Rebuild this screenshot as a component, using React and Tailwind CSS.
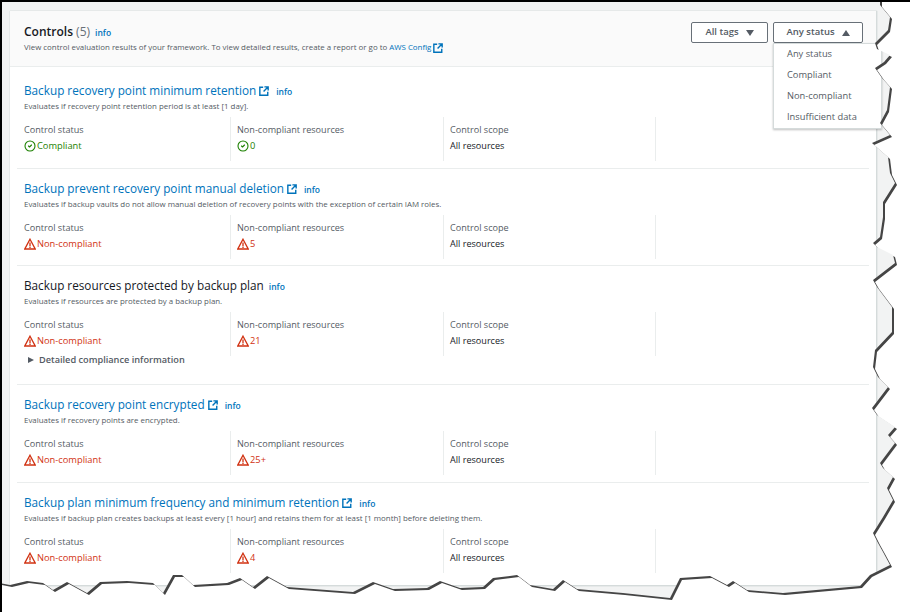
import { CircleCheck } from "lucide-react"

const font = "font-['Open_Sans','Noto_Sans',sans-serif]"

const controls = [
  {
    title: "Backup recovery point minimum retention",
    desc: "Evaluates if recovery point retention period is at least [1 day].",
    link: true,
    ok: true,
    count: "0",
    height: "h-[98px]",
  },
  {
    title: "Backup prevent recovery point manual deletion",
    desc: "Evaluates if backup vaults do not allow manual deletion of recovery points with the exception of certain IAM roles.",
    link: true,
    count: "5",
    height: "h-[97px]",
  },
  {
    title: "Backup resources protected by backup plan",
    desc: "Evaluates if resources are protected by a backup plan.",
    count: "21",
    details: true,
    height: "h-[119px]",
  },
  {
    title: "Backup recovery point encrypted",
    desc: "Evaluates if recovery points are encrypted.",
    link: true,
    count: "25+",
    height: "h-[98px]",
  },
  {
    title: "Backup plan minimum frequency and minimum retention",
    desc: "Evaluates if backup plan creates backups at least every [1 hour] and retains them for at least [1 month] before deleting them.",
    link: true,
    count: "4",
    last: true,
    height: "h-[100px]",
  },
]

const ExternalIcon = ({ className }) => (
  <svg viewBox="0 0 12 12" className={className} fill="none" stroke="currentColor" strokeWidth="1.7">
    <path d="M5 1.5H1v9.5h9.5V7" />
    <path d="M6.5 1h4.5v4.5M11 1 5.5 6.5" />
  </svg>
)

const WarnIcon = () => (
  <svg viewBox="0 0 12 12" className="h-[12px] w-[12px] shrink-0 text-[#d13212]" fill="none" stroke="currentColor" strokeWidth="1.3">
    <path d="M6 1.2 11.2 11H.8Z" strokeLinejoin="miter" />
    <path d="M6 4.4v3.6M6 8.6v1.3" />
  </svg>
)

const Status = ({ ok, children }) => (
  <div className={`mt-[4px] flex h-[12px] items-center gap-[1px] text-[9.3px] ${ok ? "text-[#1d8102]" : "text-[#d13212]"}`}>
    {ok ? <CircleCheck className="h-[12px] w-[12px] shrink-0" strokeWidth={2.2} /> : <WarnIcon />}
    <span>{children}</span>
  </div>
)

const Info = () => <span className="text-[8.5px] font-semibold text-[#0073bb]">info</span>

const ControlRow = ({ control }) => (
  <div className={`mx-[7px] pl-[7px] pt-[13px] ${control.last ? "" : "border-b border-[#eaeded]"} ${control.height}`}>
    <div className={`flex h-[14px] items-center text-[11.75px] ${control.link ? "text-[#0073bb]" : "text-[#16191f]"}`}>
      <span>{control.title}</span>
      {control.link && <ExternalIcon className="ml-[3px] h-[10px] w-[10px]" />}
      <span className={control.link ? "ml-[7px]" : "ml-[5px]"}><Info /></span>
    </div>
    <p className="mt-[3px] text-[7.9px] leading-[11px] text-[#545b64]">{control.desc}</p>
    <div className="-ml-[7px] mt-[5px] grid h-[44px] grid-cols-[214px_213px_212px_1fr]">
      <div className="border-r border-[#eaeded] pl-[7px] pt-[7px]">
        <p className="text-[9.1px] leading-[12px] text-[#545b64]">Control status</p>
        <Status ok={control.ok}>{control.ok ? "Compliant" : "Non-compliant"}</Status>
      </div>
      <div className="border-r border-[#eaeded] pl-[6px] pt-[7px]">
        <p className="text-[9.1px] leading-[12px] text-[#545b64]">Non-compliant resources</p>
        <Status ok={control.ok}>{control.count}</Status>
      </div>
      <div className="border-r border-[#eaeded] pl-[6px] pt-[7px]">
        <p className="text-[9.1px] leading-[12px] text-[#545b64]">Control scope</p>
        <p className="mt-[4px] text-[9.1px] leading-[12px] text-[#16191f]">All resources</p>
      </div>
      <div />
    </div>
    {control.details && (
      <div className="-mt-[2px] flex h-[12px] items-center gap-[5px] pl-[4px] text-[9.2px] font-semibold text-[#545b64]">
        <span className="h-0 w-0 border-y-[3.5px] border-l-[6px] border-y-transparent border-l-[#545b64]" />
        Detailed compliance information
      </div>
    )}
  </div>
)

const FilterButton = ({ label, open, className }) => (
  <button
    type="button"
    className={`flex h-[21px] items-center justify-center gap-[7px] rounded-[2px] border border-[#687078] bg-white text-[9.5px] font-semibold text-[#545b64] ${className}`}
  >
    {label}
    <svg viewBox="0 0 8 6" className="h-[6px] w-[8px] fill-[#545b64]">
      <path d={open ? "M4 0 8 6H0Z" : "M0 0h8L4 6Z"} />
    </svg>
  </button>
)

// page outline: top right corner, down the torn right side, back along the torn bottom
const tear =
  "M880 5 890 17 888 30 875 43 877 49 890 55 884 62 875 68 882 78 890 87 887 110 880 123 890 135 872 143 888 157 890 173 895 183 883 202 883 217 880 237 873 243 877 247 893 255 895 263 873 280 877 287 892 307 892 332 875 350 873 367 878 377 888 387 872 408 877 415 895 427 888 435 895 443 880 463 883 468 893 477 887 488 893 500 883 517 873 533 878 543 883 552 890 565 870 575 860 586 783 593 747 590 733 581 727 585 710 576 680 578 670 598 623 593 577 589 563 580 553 589 530 585 517 575 493 578 483 587 460 588 440 581 427 588 393 589 373 582 353 592 287 587 267 576 253 587 240 578 227 583 193 585 182 575 173 575 163 593 153 583 127 581 100 582 87 593 67 582 53 590 43 583 27 581 10 585 0 583"

const TornEdge = () => (
  <svg viewBox="0 0 910 612" className="absolute -left-[2px] -top-[2px] z-20 h-[612px] w-[910px]">
    <defs>
      <clipPath id="outside">
        <path d={`${tear} L0 612 910 612 910 0 880 0Z`} />
      </clipPath>
      <filter id="soft" x="-5%" y="-5%" width="110%" height="110%">
        <feGaussianBlur stdDeviation="0.7" />
      </filter>
    </defs>
    <path d={`${tear} L0 612 910 612 910 0 880 0Z`} fill="#fff" />
    <g clipPath="url(#outside)">
      <path d={`${tear} L0 0 880 0Z`} transform="translate(2 2)" fill="#444" filter="url(#soft)" />
    </g>
  </svg>
)

export default function App() {
  return (
    <div className={`relative h-[612px] w-[910px] overflow-hidden border-l-2 border-t-2 border-black bg-[#f2f3f3] pl-[8px] pt-[9px] ${font}`}>
      <div className="h-[575px] w-[867px] border-r border-b border-[#d5dbdb] bg-white shadow-[0_0_1px_#aab7b8]">
        <div className="flex h-[56px] justify-between border-b border-[#eaeded] bg-[#fafafa] pl-[14px] pr-[13px] pt-[12px]">
          <div>
            <div className="flex items-baseline gap-[5px] text-[#16191f]">
              <h2 className="text-[12px] font-semibold leading-[18px]">
                Controls <span className="font-normal text-[#687078]">(5)</span>
              </h2>
              <Info />
            </div>
            <p className="mt-[1px] flex items-center gap-[2px] text-[7.9px] text-[#545b64]">
              View control evaluation results of your framework. To view detailed results, create a report or go to
              <span className="text-[#0073bb]">AWS Config</span>
              <ExternalIcon className="h-[10px] w-[10px] text-[#0073bb]" />
            </p>
          </div>
          <div className="-mt-[1px] flex gap-[5px]">
            <FilterButton label="All tags" className="w-[77px]" />
            <div className="relative">
              <FilterButton label="Any status" open className="w-[90px]" />
              <ul className="absolute left-0 top-[21px] z-10 w-[109px] border border-[#d5dbdb] bg-white pb-[1px] text-[9.3px] text-[#545b64] shadow-[0_1px_2px_rgba(0,0,0,0.25)]">
                {["Any status", "Compliant", "Non-compliant", "Insufficient data"].map((item) => (
                  <li key={item} className="flex h-[20.75px] items-center pl-[13px]">
                    {item}
                  </li>
                ))}
              </ul>
            </div>
          </div>
        </div>
        <div className="pt-[4px]">
          {controls.map((control) => (
            <ControlRow key={control.title} control={control} />
          ))}
        </div>
      </div>
      <TornEdge />
    </div>
  )
}
